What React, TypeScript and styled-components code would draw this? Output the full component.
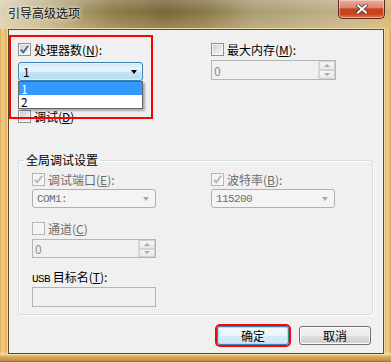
import React from 'react';
import styled, { createGlobalStyle } from 'styled-components';

const GlobalStyle = createGlobalStyle`
  html, body {
    margin: 0;
    padding: 0;
  }
  body {
    width: 391px;
    height: 362px;
    overflow: hidden;
    font-family: "Noto Sans CJK SC", "Liberation Sans", sans-serif;
    font-size: 12px;
    color: #000;
  }
`;

const Frame = styled.div`
  width: 391px;
  height: 362px;
  box-sizing: border-box;
  display: flex;
  flex-direction: column;
  background:
    linear-gradient(180deg, rgba(0, 0, 0, 0) 352px, #f4dca8 354px, #d6a552 357px, #c89848 360px, #8a6a30 362px),
    linear-gradient(90deg, #d9a855 0, #f3d08e 2px, #e8b564 6px, #e2b060 50%, #e8b466 384px, #f2cc88 388px, #d9a855 391px);
`;

const TitleBar = styled.div`
  height: 29px;
  flex-shrink: 0;
  display: flex;
  align-items: flex-start;
  background:
    linear-gradient(180deg, rgba(255, 255, 255, 0.18) 0, rgba(255, 255, 255, 0) 40%, rgba(255, 230, 180, 0.25) 100%),
    linear-gradient(90deg, #ddd3b8 0%, #c0b28a 12%, #8e7e4c 28%, #786839 42%, #877848 52%, #a99a70 64%, #b7a882 78%, #c3b28a 90%, #d9b472 100%);
`;

const Title = styled.div`
  padding: 5px 0 0 8px;
  font-size: 12px;
  line-height: 16px;
  color: #111;
  text-shadow: 0 0 6px rgba(255, 255, 255, 0.9), 0 0 3px rgba(255, 255, 255, 0.7);
`;

const CloseButton = styled.div`
  margin-left: auto;
  margin-right: 6px;
  width: 47px;
  height: 19px;
  box-sizing: border-box;
  border: 1px solid #5a2c20;
  border-top: none;
  border-radius: 0 0 5px 5px;
  display: flex;
  align-items: center;
  justify-content: center;
  background: linear-gradient(180deg, #eab0a0 0%, #dc8670 42%, #c7421f 50%, #c9421e 78%, #e27a4c 100%);
  box-shadow: inset 0 0 0 1px rgba(255, 220, 200, 0.55);
`;

const Client = styled.div`
  position: relative;
  flex: 1;
  margin: 0 7px 8px 8px;
  border: 1px solid #5c4a2c;
  box-shadow: 0 0 0 1px #f2dcae;
  background: #f0f0f0;
  display: flex;
  flex-direction: column;
  padding: 13px 12px 0 9px;
`;

const Highlight = styled.div`
  position: absolute;
  left: 0;
  top: 5px;
  width: 144px;
  height: 84px;
  box-sizing: border-box;
  border: 2px solid #ff0000;
  z-index: 3;
  pointer-events: none;
`;

const TopGrid = styled.div`
  display: grid;
  grid-template-columns: 193px 125px;
`;

const Column = styled.div`
  display: flex;
  flex-direction: column;
  align-items: flex-start;
`;

const CheckRow = styled.div<{ $disabled?: boolean; $gap?: number }>`
  display: flex;
  align-items: center;
  height: 13px;
  margin-top: ${(p) => p.$gap ?? 0}px;
  color: ${(p) => (p.$disabled ? '#6d6d6d' : '#000')};
  white-space: nowrap;
`;

const Box = styled.span<{ $disabled?: boolean }>`
  width: 13px;
  height: 13px;
  box-sizing: border-box;
  flex-shrink: 0;
  display: flex;
  align-items: center;
  justify-content: center;
  border: 1px solid ${(p) => (p.$disabled ? '#b6b6b6' : '#8e8f8f')};
  background: ${(p) =>
    p.$disabled
      ? '#f4f4f4'
      : 'linear-gradient(135deg, #c9ccd1 0%, #e6e7e9 55%, #fbfbfb 100%)'};
  box-shadow: inset 0 0 0 1px ${(p) => (p.$disabled ? '#f7f7f7' : '#f4f4f4')};
`;

const Label = styled.span`
  margin-left: 3px;
  line-height: 13px;
`;

const U = styled.span`
  text-decoration: underline;
`;

const Mono = styled.span`
  font-family: "Liberation Mono", "DejaVu Sans Mono", monospace;
  font-size: 11px;
  letter-spacing: -0.6px;
`;

const ComboWrap = styled.div`
  position: relative;
  margin-top: 6px;
  z-index: 2;
`;

const FocusCombo = styled.div`
  width: 125px;
  height: 19px;
  box-sizing: border-box;
  border: 1px solid #3c7fb1;
  border-radius: 3px;
  display: flex;
  align-items: center;
  justify-content: space-between;
  padding: 0 5px 0 4px;
  background: linear-gradient(180deg, #c9e7f8 0%, #e4f4fc 30%, #dff1fb 50%, #c4e4f6 55%, #b5ddf3 100%);
  box-shadow: inset 0 0 0 1px rgba(255, 255, 255, 0.45);
`;

const Arrow = styled.span<{ $disabled?: boolean }>`
  width: 0;
  height: 0;
  border-left: 3.5px solid transparent;
  border-right: 3.5px solid transparent;
  border-top: 4px solid ${(p) => (p.$disabled ? '#a6a6a6' : '#000')};
`;

const DropList = styled.div`
  position: absolute;
  left: 0;
  top: 100%;
  width: 125px;
  box-sizing: border-box;
  border: 1px solid #646464;
  background: #fff;
  box-shadow: 2px 2px 2px rgba(0, 0, 0, 0.3);
`;

const DropItem = styled.div<{ $selected?: boolean }>`
  height: 13px;
  line-height: 13px;
  padding-left: 2px;
  background: ${(p) => (p.$selected ? '#3399ff' : '#fff')};
  color: ${(p) => (p.$selected ? '#fff' : '#000')};
`;

const Spin = styled.div<{ $width: number; $gap?: number; $height?: number }>`
  width: ${(p) => p.$width}px;
  height: ${(p) => p.$height ?? 19}px;
  margin-top: ${(p) => p.$gap ?? 0}px;
  box-sizing: border-box;
  border: 1px solid #b4b4b4;
  background: #f0f0f0;
  display: flex;
  align-items: stretch;
  color: #8c8c8c;
`;

const SpinText = styled.div`
  flex: 1;
  padding-left: 2px;
  display: flex;
  align-items: center;
`;

const SpinButtons = styled.div`
  width: 16px;
  display: flex;
  flex-direction: column;
  border-left: 1px solid #dcdcdc;
`;

const SpinHalf = styled.div`
  flex: 1;
  display: flex;
  align-items: center;
  justify-content: center;
  border: 1px solid #d2d2d2;
  margin: 0 0 0 0;
  background: linear-gradient(180deg, #f6f6f6, #e8e8e8);
`;

const TinyArrow = styled.span<{ $up?: boolean }>`
  width: 0;
  height: 0;
  border-left: 3px solid transparent;
  border-right: 3px solid transparent;
  ${(p) => (p.$up ? 'border-bottom: 3px solid #a8a8a8;' : 'border-top: 3px solid #a8a8a8;')}
`;

const Group = styled.fieldset`
  width: 355px;
  box-sizing: border-box;
  margin: 29px 0 0 0;
  padding: 0;
  min-width: 0;
  border: 1px solid #d5dfe5;
  border-radius: 3px;
  box-shadow: inset 1px 1px 0 #fff, 1px 1px 0 #fff;
`;

const Legend = styled.legend`
  margin-left: 5px;
  padding: 0 2px;
  font-size: 12px;
  line-height: 16px;
  color: #000;
`;

const GroupBody = styled.div`
  display: grid;
  grid-template-columns: 179px 124px;
  padding: 5px 0 7px 13px;
`;

const DisabledCombo = styled.div`
  width: 124px;
  height: 19px;
  margin-top: 3px;
  box-sizing: border-box;
  border: 1px solid #b0b0b0;
  border-radius: 3px;
  background: #f4f4f4;
  color: #6d6d6d;
  display: flex;
  align-items: center;
  justify-content: space-between;
  padding: 0 6px 0 4px;
`;

const FieldLabel = styled.div`
  margin-top: 12px;
  height: 14px;
  line-height: 14px;
  white-space: nowrap;
`;

const TextBox = styled.div`
  width: 124px;
  height: 20px;
  margin-top: 3px;
  box-sizing: border-box;
  border: 1px solid #b4b4b4;
  background: #f0f0f0;
`;

const ButtonRow = styled.div`
  display: flex;
  justify-content: flex-end;
  gap: 10px;
  margin-top: 11px;
`;

const DialogButton = styled.div<{ $default?: boolean }>`
  width: 72px;
  height: 19px;
  box-sizing: border-box;
  border: 1px solid ${(p) => (p.$default ? '#3c7fb1' : '#707070')};
  border-radius: 3px;
  display: flex;
  align-items: center;
  justify-content: center;
  font-size: 12px;
  background: ${(p) =>
    p.$default
      ? 'linear-gradient(180deg, #f3f9fd 0%, #e8f4fb 50%, #d6ecf8 50%, #cbe6f6 100%)'
      : 'linear-gradient(180deg, #f2f2f2 0%, #ebebeb 50%, #dddddd 50%, #cfcfcf 100%)'};
  box-shadow: inset 0 0 0 1px ${(p) => (p.$default ? '#9ee8fb' : '#fcfcfc')};
  outline: ${(p) => (p.$default ? '2px solid #ff0000' : 'none')};
  outline-offset: 0;
`;

const Check = ({ disabled }: { disabled?: boolean }) => (
  <svg width="11" height="11" viewBox="0 0 11 11">
    <path
      d="M1.8 5.6 L4.3 8.4 L9.2 1.8"
      fill="none"
      stroke={disabled ? '#b4b4b4' : '#4b5f92'}
      strokeWidth="1.8"
    />
  </svg>
);

type CheckBoxProps = {
  checked?: boolean;
  disabled?: boolean;
  gap?: number;
  children: React.ReactNode;
};

const CheckBox = ({ checked, disabled, gap, children }: CheckBoxProps) => (
  <CheckRow $disabled={disabled} $gap={gap}>
    <Box $disabled={disabled}>{checked && <Check disabled={disabled} />}</Box>
    <Label>{children}</Label>
  </CheckRow>
);

const SpinBox = ({ width, gap, height }: { width: number; gap?: number; height?: number }) => (
  <Spin $width={width} $gap={gap} $height={height}>
    <SpinText>0</SpinText>
    <SpinButtons>
      <SpinHalf>
        <TinyArrow $up />
      </SpinHalf>
      <SpinHalf>
        <TinyArrow />
      </SpinHalf>
    </SpinButtons>
  </Spin>
);

const App = () => {
  return (
    <>
      <GlobalStyle />
      <Frame>
        <TitleBar>
          <Title>引导高级选项</Title>
          <CloseButton>
            <svg width="12" height="10" viewBox="0 0 12 10">
              <path d="M2 1.5 L10 8.5 M10 1.5 L2 8.5" stroke="#4a3a3a" strokeWidth="3.6" strokeLinecap="square" />
              <path d="M2 1.5 L10 8.5 M10 1.5 L2 8.5" stroke="#ffffff" strokeWidth="2" strokeLinecap="square" />
            </svg>
          </CloseButton>
        </TitleBar>
        <Client>
          <Highlight />
          <TopGrid>
            <Column>
              <CheckBox checked>
                处理器数(<U>N</U>):
              </CheckBox>
              <ComboWrap>
                <FocusCombo>
                  <span>1</span>
                  <Arrow />
                </FocusCombo>
                <DropList>
                  <DropItem $selected>1</DropItem>
                  <DropItem>2</DropItem>
                </DropList>
              </ComboWrap>
              <CheckBox gap={29}>
                调试(<U>D</U>)
              </CheckBox>
            </Column>
            <Column>
              <CheckBox>
                最大内存(<U>M</U>):
              </CheckBox>
              <SpinBox width={125} gap={4} height={20} />
            </Column>
          </TopGrid>
          <Group>
            <Legend>全局调试设置</Legend>
            <GroupBody>
              <Column>
                <CheckBox checked disabled>
                  调试端口(<U>E</U>):
                </CheckBox>
                <DisabledCombo>
                  <Mono>COM1:</Mono>
                  <Arrow $disabled />
                </DisabledCombo>
                <CheckBox disabled gap={14}>
                  通道(<U>C</U>)
                </CheckBox>
                <SpinBox width={124} gap={4} />
                <FieldLabel>
                  <Mono>USB</Mono> 目标名(<U>T</U>):
                </FieldLabel>
                <TextBox />
              </Column>
              <Column>
                <CheckBox checked disabled>
                  波特率(<U>B</U>):
                </CheckBox>
                <DisabledCombo>
                  <Mono>115200</Mono>
                  <Arrow $disabled />
                </DisabledCombo>
              </Column>
            </GroupBody>
          </Group>
          <ButtonRow>
            <DialogButton $default>确定</DialogButton>
            <DialogButton>取消</DialogButton>
          </ButtonRow>
        </Client>
      </Frame>
    </>
  );
};

export default App;
